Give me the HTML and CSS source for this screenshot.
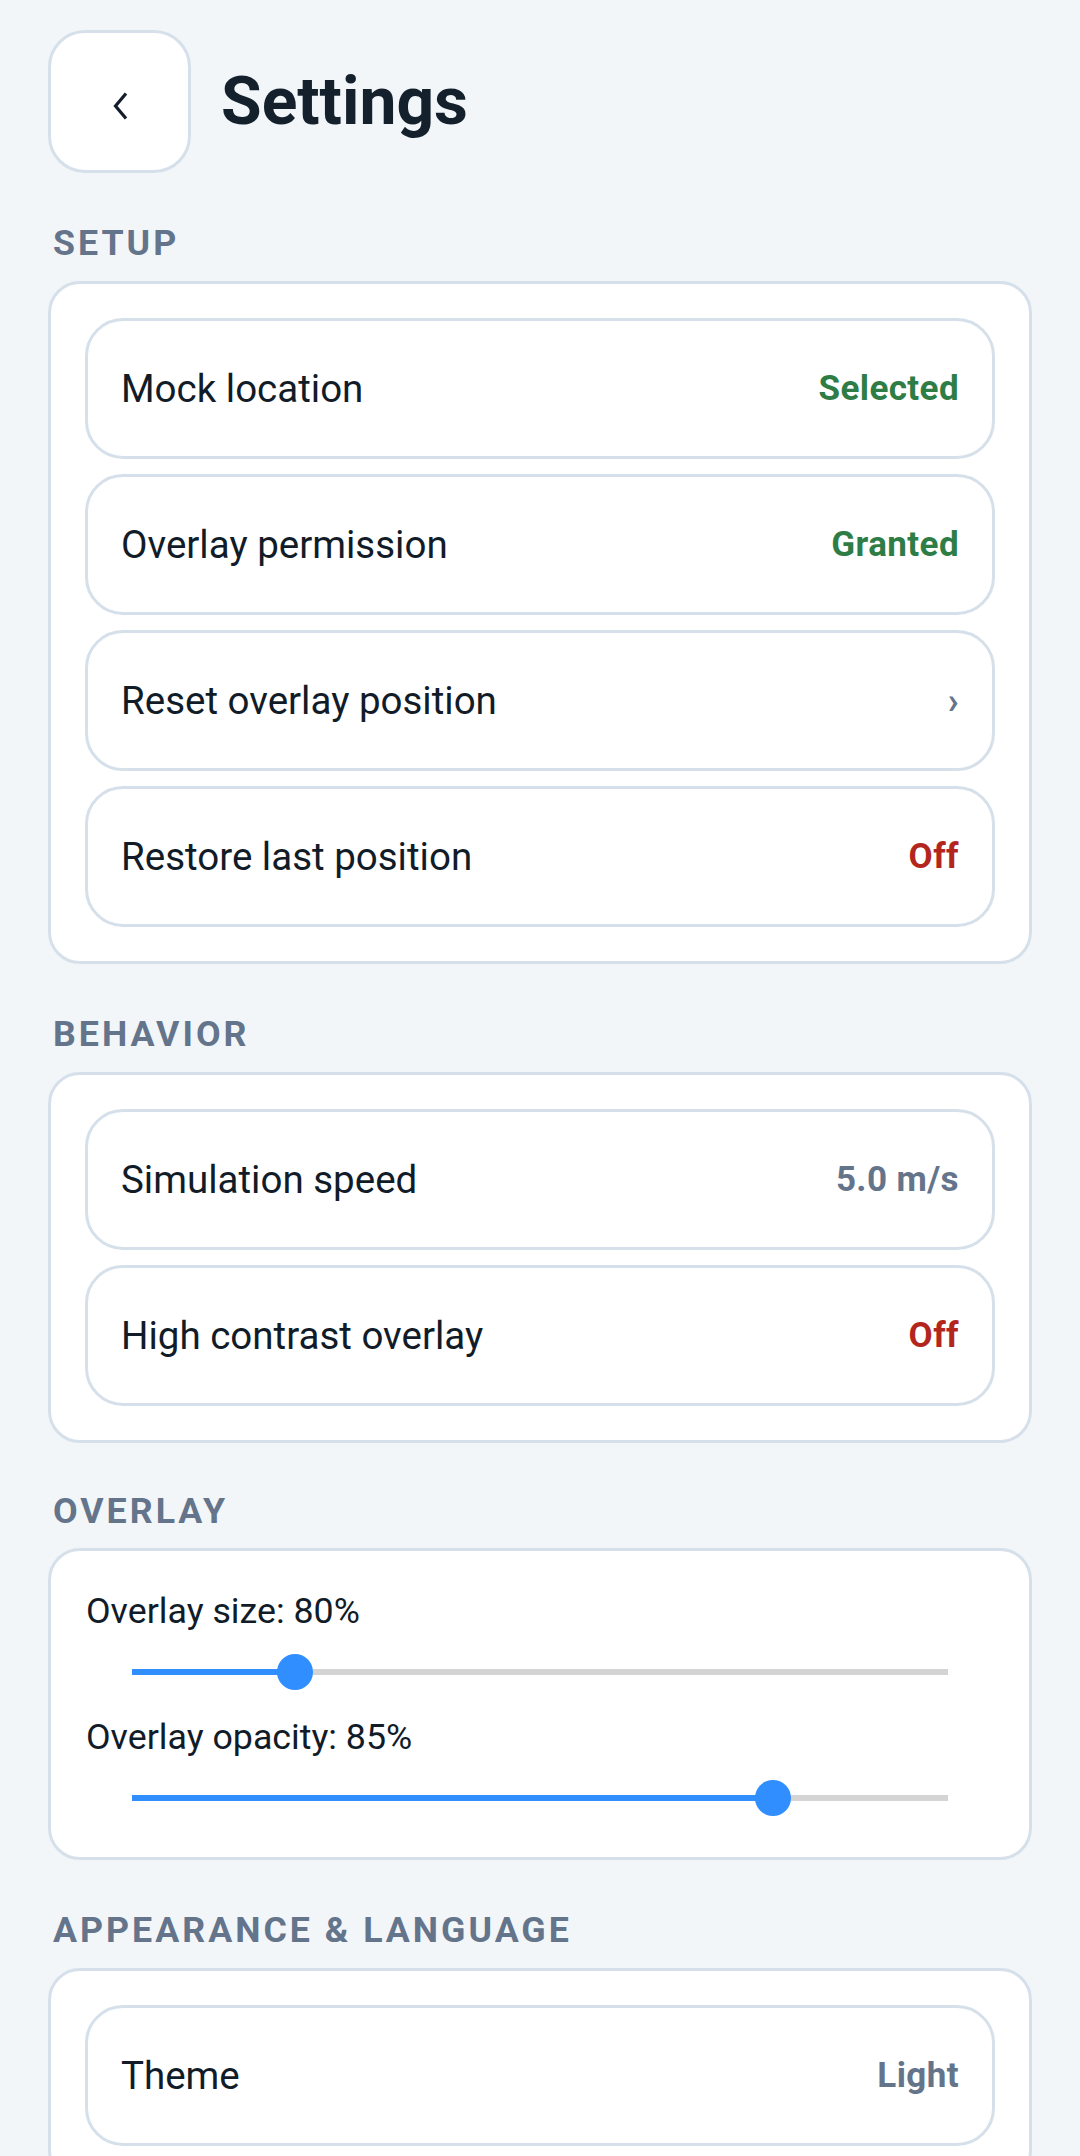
FILE: index.html
```html
<!DOCTYPE html>
<html lang="en" dir="ltr">
  <head>
    <meta charset="utf-8">
    <title>Settings</title>
    <link rel="stylesheet" href="styles.css">
  </head>
  <body>
    <header class="top-bar">
      <button class="back-button" aria-label="Back">
        <svg width="20" height="32" viewBox="0 0 20 32">
          <path d="M15 3.5 L4.5 16 L15 28.5" fill="none" stroke="#141e2a" stroke-width="3.2" stroke-linejoin="miter"/>
        </svg>
      </button>
      <h1 class="title">Settings</h1>
    </header>

    <h2 class="section-label">Setup</h2>
    <div class="card">
      <div class="row">
        <span class="row-label">Mock location</span>
        <span class="value good">Selected</span>
      </div>
      <div class="row">
        <span class="row-label">Overlay permission</span>
        <span class="value good">Granted</span>
      </div>
      <div class="row">
        <span class="row-label">Reset overlay position</span>
        <span class="value muted chevron">›</span>
      </div>
      <div class="row">
        <span class="row-label">Restore last position</span>
        <span class="value bad">Off</span>
      </div>
    </div>

    <h2 class="section-label">Behavior</h2>
    <div class="card">
      <div class="row">
        <span class="row-label">Simulation speed</span>
        <span class="value muted">5.0 m/s</span>
      </div>
      <div class="row">
        <span class="row-label">High contrast overlay</span>
        <span class="value bad">Off</span>
      </div>
    </div>

    <h2 class="section-label overlay-label">Overlay</h2>
    <div class="card sliders">
      <div class="slider-block">
        <div class="slider-label">Overlay size: 80%</div>
        <div class="slider">
          <div class="track">
            <div class="fill" style="width: 20%"></div>
            <div class="thumb" style="left: 20%"></div>
          </div>
        </div>
      </div>
      <div class="slider-block">
        <div class="slider-label">Overlay opacity: 85%</div>
        <div class="slider">
          <div class="track">
            <div class="fill" style="width: 78.6%"></div>
            <div class="thumb" style="left: 78.6%"></div>
          </div>
        </div>
      </div>
    </div>

    <h2 class="section-label">Appearance &amp; Language</h2>
    <div class="card">
      <div class="row">
        <span class="row-label">Theme</span>
        <span class="value muted">Light</span>
      </div>
    </div>
  </body>
</html>
```

FILE: styles.css
```css
html {
  background: #f2f6f9;
}

body {
  margin: 0;
  padding: 30px 48px 0;
  font-family: Roboto, "Liberation Sans", sans-serif;
  color: #111c28;
}

.top-bar {
  display: flex;
  align-items: center;
  gap: 30px;
}

.back-button {
  width: 143px;
  height: 143px;
  box-sizing: border-box;
  display: flex;
  align-items: center;
  justify-content: center;
  padding: 8px 0 0 2px;
  background: #fff;
  border: 3px solid #d6e0ea;
  border-radius: 37px;
}

.title {
  margin: 0;
  font-size: 66px;
  font-weight: 700;
  line-height: 1;
  color: #14202c;
}

.section-label {
  margin: 49px 0 17px;
  padding-left: 5px;
  font-size: 35.75px;
  font-weight: 700;
  line-height: 42px;
  letter-spacing: 3px;
  text-transform: uppercase;
  color: #64748b;
}

.overlay-label {
  margin-top: 47px;
  margin-bottom: 16px;
}

.card {
  display: flex;
  flex-direction: column;
  gap: 15px;
  padding: 34px;
  background: #fff;
  border: 3px solid #d6e0ea;
  border-radius: 32px;
}

.row {
  height: 141px;
  box-sizing: border-box;
  display: flex;
  align-items: center;
  justify-content: space-between;
  padding: 0 33px;
  border: 3px solid #d6e0ea;
  border-radius: 38px;
}

.row-label {
  font-size: 38.5px;
  color: #111c28;
}

.value {
  font-size: 35px;
  font-weight: 700;
  letter-spacing: 0.4px;
}

.good {
  color: #2e7d46;
}

.bad {
  color: #b3261e;
}

.muted {
  color: #64748b;
}

.chevron {
  font-size: 36px;
}

/* overlay sliders */
.sliders {
  gap: 26px;
  padding: 39px 36px 41px;
}

.slider-label {
  font-size: 35.75px;
  line-height: 42px;
  color: #111c28;
  margin-left: -1px;
}

.slider {
  height: 36px;
  margin: 22px 45px 0;
  display: flex;
  align-items: center;
}

.track {
  position: relative;
  flex: 1;
  height: 6px;
  background: #d4d4d4;
}

.fill {
  height: 100%;
  background: #318eff;
}

.thumb {
  position: absolute;
  top: 50%;
  width: 36px;
  height: 36px;
  border-radius: 50%;
  background: #318eff;
  transform: translate(-50%, -50%);
}
```
